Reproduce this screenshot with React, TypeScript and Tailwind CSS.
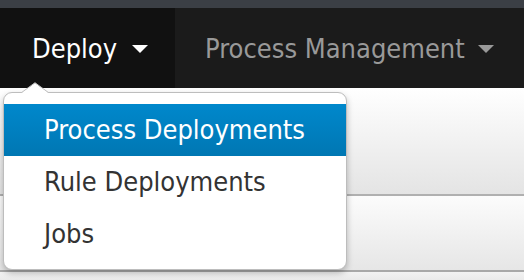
import React from "react";

const font = {
  fontFamily: '"DejaVu Sans Condensed", "DejaVu Sans", Verdana, sans-serif',
  fontStretch: "condensed" as const,
};

function Caret({ color }: { color: string }) {
  return (
    <svg width="16" height="8" viewBox="0 0 16 8" className="block">
      <path d="M0 0 L16 0 L8 8 Z" fill={color} />
    </svg>
  );
}

export default function App() {
  return (
    <div className="relative w-[524px] h-[280px] overflow-hidden bg-white" style={font}>
      <div className="h-2 bg-[#3b3f45]" />
      <div className="h-20 flex bg-[#1b1b1b]">
        <div className="w-[175px] bg-[#111111] flex items-center pl-[32px]">
          <span className="text-[27px] leading-none text-white">Deploy</span>
          <span className="ml-[15px] mt-[2px]">
            <Caret color="#ffffff" />
          </span>
        </div>
        <div className="flex items-center pl-[30px]">
          <span className="text-[27px] leading-none text-[#999999]">Process Management</span>
          <span className="ml-[13px] mt-[2px]">
            <Caret color="#999999" />
          </span>
        </div>
      </div>
      <div className="relative">
        <div className="h-[106px] bg-gradient-to-b from-[#ffffff] to-[#e4e4e4]" />
        <div className="h-[2px] bg-[#b0b0b0]" />
        <div className="h-[74px] bg-gradient-to-b from-[#fcfcfc] to-[#e6e6e6]" />
        <div className="h-[2px] bg-[#a8a8a8]" />
        <div className="h-[10px] bg-gradient-to-b from-[#f2f2f2] to-[#e8e8e8]" />

        <div className="absolute left-[3px] top-[4px] w-[344px] h-[178px] bg-white border border-[#bdbdbd] rounded-[9px] shadow-[0_3px_6px_rgba(0,0,0,0.25)] pt-[11px]">
          <div className="h-[52px] flex items-center pl-[40px] text-[27px] text-white bg-gradient-to-b from-[#0088cc] to-[#0077b3]">
            Process Deployments
          </div>
          <div className="h-[52px] flex items-center pl-[40px] text-[27px] text-[#333333]">
            Rule Deployments
          </div>
          <div className="h-[52px] flex items-center pl-[40px] text-[27px] text-[#333333]">
            Jobs
          </div>
        </div>
        <svg
          className="absolute left-[21px] top-[-6px]"
          width="28"
          height="11"
          viewBox="0 0 28 11"
        >
          <path d="M0.5 11 L14 0.7 L27.5 11 Z" fill="#ffffff" />
          <path d="M0.5 10.6 L14 0.7 L27.5 10.6" fill="none" stroke="#bdbdbd" strokeWidth="1" />
        </svg>
      </div>
    </div>
  );
}
